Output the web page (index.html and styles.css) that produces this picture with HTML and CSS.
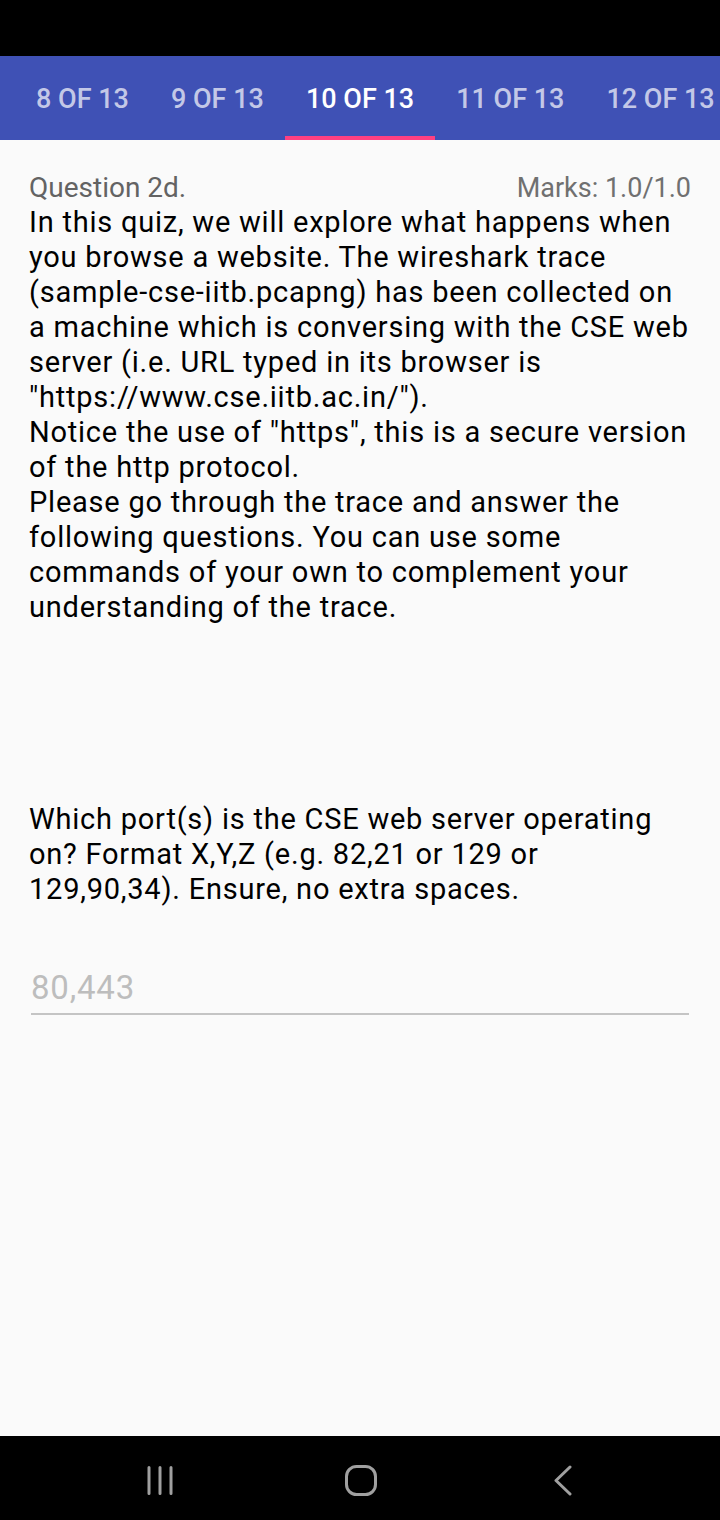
FILE: index.html
```html
<!DOCTYPE html>
<html>
<head>
<meta charset="utf-8">
<link rel="stylesheet" href="styles.css">
</head>
<body>
<div class="phone">
  <div class="statusbar"></div>
  <div class="tabbar">
    <div class="tabs">
      <div class="tab">8 OF 13</div>
      <div class="tab">9 OF 13</div>
      <div class="tab active">10 OF 13</div>
      <div class="tab">11 OF 13</div>
      <div class="tab">12 OF 13</div>
    </div>
  </div>
  <main class="content">
    <div class="qhead">
      <span class="qnum">Question 2d.</span>
      <span class="marks">Marks: 1.0/1.0</span>
    </div>
    <p class="intro">In this quiz, we will explore what happens when you browse a website. The wireshark trace (sample-cse-iitb.pcapng) has been collected on a machine which is conversing with the CSE web server (i.e. URL typed in its browser is "https://www.cse.iitb.ac.in/").<br>Notice the use of "https", this is a secure version of the http protocol.<br>Please go through the trace and answer the following questions. You can use some commands of your own to complement your understanding of the trace.</p>
    <p class="question">Which port(s) is the CSE web server operating on? Format X,Y,Z (e.g. 82,21 or 129 or 129,90,34). Ensure, no extra spaces.</p>
    <div class="answer">80,443</div>
  </main>
  <nav class="navbar">
    <svg class="nav-icon" width="30" height="31" viewBox="0 0 30 31"><path d="M4 2.5v26M15 2.5v26M26 2.5v26" stroke="#a0a0a0" stroke-width="3" stroke-linecap="round" fill="none"/></svg>
    <svg class="nav-icon" width="33" height="32" viewBox="0 0 33 32"><rect x="1.5" y="1.5" width="29" height="28" rx="10" ry="10" stroke="#a0a0a0" stroke-width="3" fill="none"/></svg>
    <svg class="nav-icon" width="20" height="31" viewBox="0 0 20 31"><path d="M17 2L3 15.5L17 29" stroke="#a0a0a0" stroke-width="3" stroke-linecap="round" stroke-linejoin="round" fill="none"/></svg>
  </nav>
</div>
</body>
</html>
```
FILE: styles.css
```css
html, body {
  margin: 0;
  padding: 0;
}
body {
  background: #000;
  font-family: Roboto, "Liberation Sans", sans-serif;
}
.phone {
  width: 720px;
  height: 1520px;
  display: flex;
  flex-direction: column;
  background: #fafafa;
  overflow: hidden;
}
.statusbar {
  height: 56px;
  background: #000;
  flex: none;
}
.tabbar {
  height: 84px;
  background: #3f51b5;
  flex: none;
  overflow: hidden;
}
.tabs {
  display: flex;
  height: 84px;
  margin-left: 15px;
}
.tab {
  flex: none;
  display: flex;
  align-items: center;
  justify-content: center;
  padding: 2px 21px 0 21px;
  height: 84px;
  box-sizing: border-box;
  font-size: 27px;
  font-weight: 500;
  color: rgba(255, 255, 255, 0.7);
  white-space: nowrap;
}
.tab.active {
  color: #fff;
  border-bottom: 4px solid #ff4081;
  padding-top: 6px;
}
.content {
  flex: 1;
  padding: 30px 24px 0 29px;
}
.qhead {
  display: flex;
  justify-content: space-between;
  align-items: center;
  height: 35px;
  margin-right: 5px;
}
.qnum {
  font-size: 28px;
  color: #636363;
}
.marks {
  font-size: 27px;
  color: #707070;
}
.intro, .question {
  margin: 0;
  font-size: 29px;
  letter-spacing: 0.77px;
  line-height: 35px;
  color: #000;
}
.question {
  margin-top: 177px;
}
.answer {
  margin: 63px 7px 0 2px;
  padding-bottom: 8px;
  font-size: 33px;
  letter-spacing: 0.8px;
  line-height: 35px;
  color: #bdbdbd;
  border-bottom: 2px solid #c4c4c4;
}
.navbar {
  height: 84px;
  flex: none;
  box-sizing: border-box;
  background: #000;
  display: grid;
  grid-template-columns: repeat(3, 201.5px);
  justify-items: center;
  align-items: center;
  padding: 5px 0 0 59px;
}
.nav-icon {
  display: block;
}
```
